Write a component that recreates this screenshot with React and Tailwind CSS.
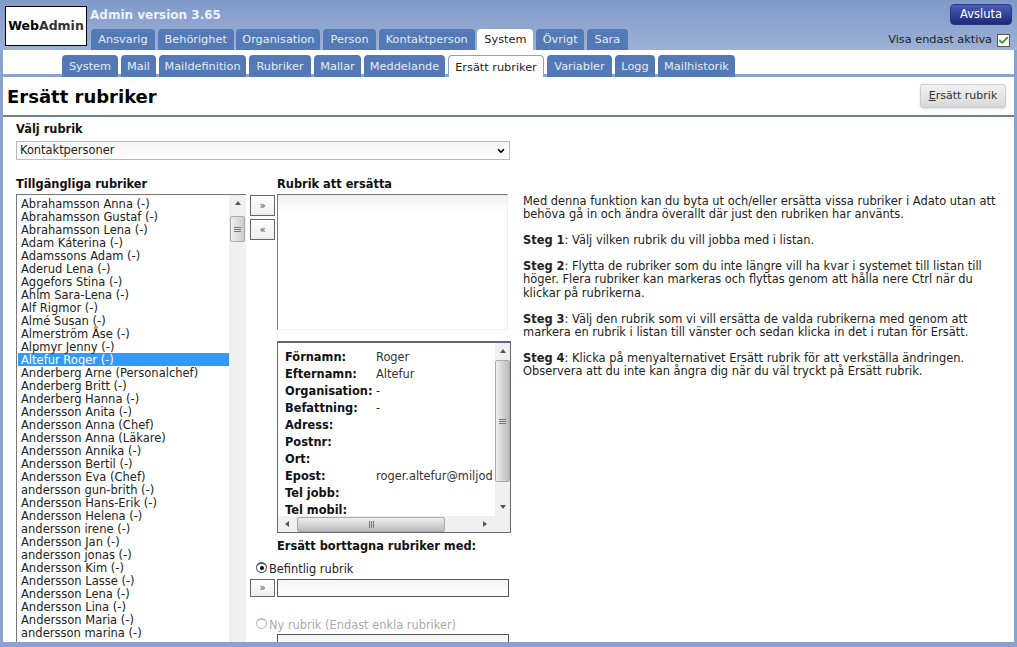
import React from 'react';
import { Check, ChevronDown } from 'lucide-react';

const mainTabs = [
    { label: 'Ansvarig', width: 'w-[64px]' },
    { label: 'Behörighet', width: 'w-[76px]' },
    { label: 'Organisation', width: 'w-[84px]' },
    { label: 'Person', width: 'w-[53px]' },
    { label: 'Kontaktperson', width: 'w-[96px]' },
    { label: 'System', width: 'w-[56px]', active: true },
    { label: 'Övrigt', width: 'w-[48px]' },
    { label: 'Sara', width: 'w-[41px]' },
];

const subTabs = [
    { label: 'System', width: 'w-[56px]' },
    { label: 'Mail', width: 'w-[35px]' },
    { label: 'Maildefinition', width: 'w-[87px]' },
    { label: 'Rubriker', width: 'w-[62px]' },
    { label: 'Mallar', width: 'w-[47px]' },
    { label: 'Meddelande', width: 'w-[81px]' },
    { label: 'Ersätt rubriker', width: 'w-[96px]', active: true },
    { label: 'Variabler', width: 'w-[65px]' },
    { label: 'Logg', width: 'w-[40px]' },
    { label: 'Mailhistorik', width: 'w-[77px]' },
];

const people = [
    'Abrahamsson Anna (-)', 'Abrahamsson Gustaf (-)', 'Abrahamsson Lena (-)', 'Adam Káterina (-)',
    'Adamssons Adam (-)', 'Aderud Lena (-)', 'Aggefors Stina (-)', 'Ahlm Sara-Lena (-)', 'Alf Rigmor (-)',
    'Almé Susan (-)', 'Almerström Åse (-)', 'Alpmyr Jenny (-)', 'Altefur Roger (-)',
    'Anderberg Arne (Personalchef)', 'Anderberg Britt (-)', 'Anderberg Hanna (-)', 'Andersson Anita (-)',
    'Andersson Anna (Chef)', 'Andersson Anna (Läkare)', 'Andersson Annika (-)', 'Andersson Bertil (-)',
    'Andersson Eva (Chef)', 'andersson gun-brith (-)', 'Andersson Hans-Erik (-)', 'Andersson Helena (-)',
    'andersson irene (-)', 'Andersson Jan (-)', 'andersson jonas (-)', 'Andersson Kim (-)',
    'Andersson Lasse (-)', 'Andersson Lena (-)', 'Andersson Lina (-)', 'Andersson Maria (-)',
    'andersson marina (-)',
];

const details = [
    ['Förnamn:', 'Roger'],
    ['Efternamn:', 'Altefur'],
    ['Organisation:', '-'],
    ['Befattning:', '-'],
    ['Adress:', ''],
    ['Postnr:', ''],
    ['Ort:', ''],
    ['Epost:', 'roger.altefur@miljod'],
    ['Tel jobb:', ''],
    ['Tel mobil:', ''],
];

function MoveButton({ children, className }) {
    return (
        <button className={`flex w-[25px] shrink-0 items-center justify-center border border-[#666] bg-gradient-to-b from-white to-[#eee] text-[10px] leading-none text-[#444] ${className}`}>
            {children}
        </button>
    );
}

function Arrow({ dir }) {
    const paths = {
        up: 'M1 5 L4 1 L7 5 Z',
        down: 'M1 1 L7 1 L4 5 Z',
        left: 'M5 1 L5 7 L1 4 Z',
        right: 'M2 1 L2 7 L6 4 Z',
    };
    return (
        <svg width="8" height="8" viewBox="0 0 8 8">
            <path d={paths[dir]} fill="#555" />
        </svg>
    );
}

function Grip({ vertical }) {
    return (
        <div className={`flex gap-[1px] ${vertical ? 'flex-col' : 'flex-row'}`}>
            <span className={`bg-[#777] ${vertical ? 'h-[1px] w-[7px]' : 'h-[7px] w-[1px]'}`}></span>
            <span className={`bg-[#777] ${vertical ? 'h-[1px] w-[7px]' : 'h-[7px] w-[1px]'}`}></span>
            <span className={`bg-[#777] ${vertical ? 'h-[1px] w-[7px]' : 'h-[7px] w-[1px]'}`}></span>
        </div>
    );
}

function Radio({ checked, disabled }) {
    return (
        <span className={`-mt-[5px] flex h-[11px] w-[11px] items-center justify-center rounded-full border border-t-2 bg-white ${disabled ? 'border-[#bbb]' : 'border-[#555]'}`}>
            {checked && <span className="h-[4px] w-[4px] rounded-full bg-black"></span>}
        </span>
    );
}

export default function App() {
    return (
        <div className="flex h-[647px] w-[1017px] flex-col overflow-hidden bg-[#8aa3ce] font-['DejaVu_Sans',Verdana,sans-serif] text-[11.4px] text-[#222]">
            <header className="flex h-[50px] shrink-0 bg-gradient-to-b from-[#7f9ac9] to-[#9db1d6] pl-[5px] pr-[5px]">
                <div className="mt-[6px] flex h-[40px] w-[82px] items-center justify-center border border-black bg-white text-[12.5px] font-bold">
                    <span className="text-black">Web</span>
                    <span className="text-[#333]">Admin</span>
                </div>
                <div className="ml-[3px] flex flex-col">
                    <div className="mt-[7px] h-[22px] text-[12px] font-bold leading-[17px] text-[#edf1f9]">Admin version 3.65</div>
                    <nav className="ml-[1px] flex gap-[2.7px]">
                        {mainTabs.map((tab) => (
                            <div
                                key={tab.label}
                                className={`flex h-[21px] items-center justify-center rounded-t-[4px] pt-[2px] text-[11.3px] ${tab.width} ${tab.active ? 'bg-white text-[#222]' : 'bg-[#537ab7] text-[#e4ebf5]'}`}
                            >
                                {tab.label}
                            </div>
                        ))}
                    </nav>
                </div>
                <div className="ml-auto flex flex-col items-end">
                    <button className="mt-[4px] h-[21px] w-[62px] rounded-[4px] border border-[#2b3a80] bg-gradient-to-b from-[#4a5cb8] to-[#1f2a78] text-[11.5px] text-white">
                        Avsluta
                    </button>
                    <div className="mr-[2px] mt-[7px] flex items-center gap-[5px] text-[11.3px] text-[#222]">
                        <span>Visa endast aktiva</span>
                        <span className="flex h-[13px] w-[13px] items-center justify-center border border-[#555] bg-white">
                            <Check size={11} strokeWidth={4} className="text-[#3c9a22]" />
                        </span>
                    </div>
                </div>
            </header>

            <div className="mx-[3px] mb-[5px] flex min-h-0 flex-1 flex-col overflow-hidden bg-white">
                <div className="flex h-[27px] shrink-0 items-end border-b-[3px] border-[#8aa3ce] pl-[59px]">
                    <nav className="-mb-[3px] flex gap-[3px]">
                        {subTabs.map((tab) => (
                            <div
                                key={tab.label}
                                className={`flex h-[22px] items-center justify-center rounded-t-[4px] pt-[3px] text-[11.3px] ${tab.width} ${tab.active ? 'border border-b-0 border-[#8aa3ce] bg-white text-[#222]' : 'bg-[#537ab7] text-[#e4ebf5]'}`}
                            >
                                {tab.label}
                            </div>
                        ))}
                    </nav>
                </div>

                <div className="flex h-[40px] shrink-0 items-center justify-between border-b-2 border-[#6a8299] pl-[4px] pr-[8px]">
                    <h1 className="text-[18px] font-bold text-black">Ersätt rubriker</h1>
                    <button className="h-[24px] w-[86px] rounded-[3px] border border-[#ccc] bg-gradient-to-b from-[#f2f2f2] to-[#d8d8d8] text-[11px] text-[#333] shadow-sm">
                        <span className="underline">E</span>rsätt rubrik
                    </button>
                </div>

                <div className="flex min-h-0 flex-1 overflow-hidden pl-[13px]">
                    <div className="flex w-[494px] shrink-0 flex-col">
                        <div className="mt-[5px] h-[19px] shrink-0 font-bold leading-[14px] text-[#111]">Välj rubrik</div>
                        <div className="flex h-[19px] shrink-0 items-center justify-between border border-[#bbb] bg-gradient-to-b from-[#f4f4f4] to-white px-[3px] pt-[1px]">
                            <span>Kontaktpersoner</span>
                            <ChevronDown size={10} strokeWidth={4} className="text-black" />
                        </div>

                        <div className="mt-[16px] flex min-h-0 flex-1">
                            <div className="flex w-[230px] shrink-0 flex-col">
                                <div className="h-[18px] shrink-0 font-bold leading-[16px] text-[#111]">Tillgängliga rubriker</div>
                                <div className="flex min-h-0 flex-1 border-l border-t border-[#777]">
                                    <ul className="w-[212px] overflow-hidden pl-[1px] pt-[2px] text-[11.5px] leading-[15px]">
                                        {people.map((name) => (
                                            <li
                                                key={name}
                                                className={`h-[13px] whitespace-nowrap pl-[3px] ${name === 'Altefur Roger (-)' ? 'bg-[#3399ff] text-white' : ''}`}
                                            >
                                                {name}
                                            </li>
                                        ))}
                                    </ul>
                                    <div className="flex w-[17px] flex-col items-center bg-[#f0f0f0]">
                                        <div className="flex h-[17px] items-center justify-center">
                                            <Arrow dir="up" />
                                        </div>
                                        <div className="mt-[4px] flex h-[26px] w-[15px] items-center justify-center rounded-[2px] border border-[#aaa] bg-gradient-to-r from-[#eee] to-[#ccc]">
                                            <Grip vertical />
                                        </div>
                                    </div>
                                </div>
                            </div>

                            <div className="ml-[4px] flex w-[25px] shrink-0 flex-col gap-[3px] pt-[19px]">
                                <MoveButton className="h-[21px]">»</MoveButton>
                                <MoveButton className="h-[21px]">«</MoveButton>
                            </div>

                            <div className="ml-[2px] flex min-w-0 flex-1 flex-col">
                                <div className="h-[18px] shrink-0 font-bold leading-[16px] text-[#111]">Rubrik att ersätta</div>
                                <div className="h-[136px] w-[231px] shrink-0 border border-[#eee] border-l-[#777] border-t-[#777]">
                                    <div className="h-[17px] bg-gradient-to-b from-[#eee] to-white"></div>
                                </div>

                                <div className="mt-[11px] flex h-[192px] w-[234px] shrink-0 flex-col border border-t-2 border-[#667]">
                                    <div className="flex min-h-0 flex-1">
                                        <div className="flex-1 overflow-hidden pl-[7px] pt-[6px] leading-[17px]">
                                            {details.map(([label, value]) => (
                                                <div key={label} className="flex h-[17px] whitespace-nowrap">
                                                    <span className="w-[91px] shrink-0 font-bold text-[#111]">{label}</span>
                                                    <span className="text-[#333]">{value}</span>
                                                </div>
                                            ))}
                                        </div>
                                        <div className="flex w-[15px] shrink-0 flex-col items-center bg-[#f0f0f0]">
                                            <div className="flex h-[17px] items-center justify-center">
                                                <Arrow dir="up" />
                                            </div>
                                            <div className="flex h-[122px] w-[15px] items-center justify-center rounded-[2px] border border-[#aaa] bg-gradient-to-r from-[#eee] to-[#bbb]">
                                                <Grip vertical />
                                            </div>
                                            <div className="mt-auto flex h-[17px] items-center justify-center">
                                                <Arrow dir="down" />
                                            </div>
                                        </div>
                                    </div>
                                    <div className="flex h-[16px] shrink-0 items-center bg-[#f0f0f0]">
                                        <div className="flex w-[19px] justify-center">
                                            <Arrow dir="left" />
                                        </div>
                                        <div className="flex h-[15px] w-[148px] items-center justify-center rounded-[2px] border border-[#aaa] bg-gradient-to-b from-[#eee] to-[#bbb]">
                                            <Grip />
                                        </div>
                                        <div className="ml-auto flex w-[50px] justify-center">
                                            <Arrow dir="right" />
                                        </div>
                                    </div>
                                </div>

                                <div className="mt-[5px] h-[19px] shrink-0 font-bold leading-[16px] text-[#111]">Ersätt borttagna rubriker med:</div>

                                <div className="-ml-[21px] mt-[6px] flex h-[14px] shrink-0 items-center gap-[2px]">
                                    <Radio checked />
                                    <span>Befintlig rubrik</span>
                                </div>
                                <div className="-ml-[27px] mt-[2px] flex h-[18px] w-[259px] shrink-0 gap-[2px]">
                                    <MoveButton className="h-[18px]">»</MoveButton>
                                    <div className="flex-1 border border-[#555] bg-gradient-to-b from-[#f4f4f4] to-white"></div>
                                </div>

                                <div className="-ml-[21px] mt-[22px] flex h-[14px] shrink-0 items-center gap-[2px] text-[#aaa]">
                                    <Radio disabled />
                                    <span>Ny rubrik (Endast enkla rubriker)</span>
                                </div>
                                <div className="mt-[1px] h-[18px] w-[232px] shrink-0 border border-[#555] bg-gradient-to-b from-[#f4f4f4] to-white"></div>
                            </div>
                        </div>
                    </div>

                    <div className="ml-[13px] flex-1 whitespace-nowrap pt-[77.5px] text-[11.43px] leading-[13.15px] text-[#222]">
                        <p className="mb-[13.15px]">
                            Med denna funktion kan du byta ut och/eller ersätta vissa rubriker i Adato utan att<br />
                            behöva gå in och ändra överallt där just den rubriken har använts.
                        </p>
                        <p className="mb-[13.15px]"><b>Steg 1</b>: Välj vilken rubrik du vill jobba med i listan.</p>
                        <p className="mb-[13.15px]">
                            <b>Steg 2</b>: Flytta de rubriker som du inte längre vill ha kvar i systemet till listan till<br />
                            höger. Flera rubriker kan markeras och flyttas genom att hålla nere Ctrl när du<br />
                            klickar på rubrikerna.
                        </p>
                        <p className="mb-[13.15px]">
                            <b>Steg 3</b>: Välj den rubrik som vi vill ersätta de valda rubrikerna med genom att<br />
                            markera en rubrik i listan till vänster och sedan klicka in det i rutan för Ersätt.
                        </p>
                        <p>
                            <b>Steg 4</b>: Klicka på menyalternativet Ersätt rubrik för att verkställa ändringen.<br />
                            Observera att du inte kan ångra dig när du väl tryckt på Ersätt rubrik.
                        </p>
                    </div>
                </div>
            </div>
        </div>
    );
}
